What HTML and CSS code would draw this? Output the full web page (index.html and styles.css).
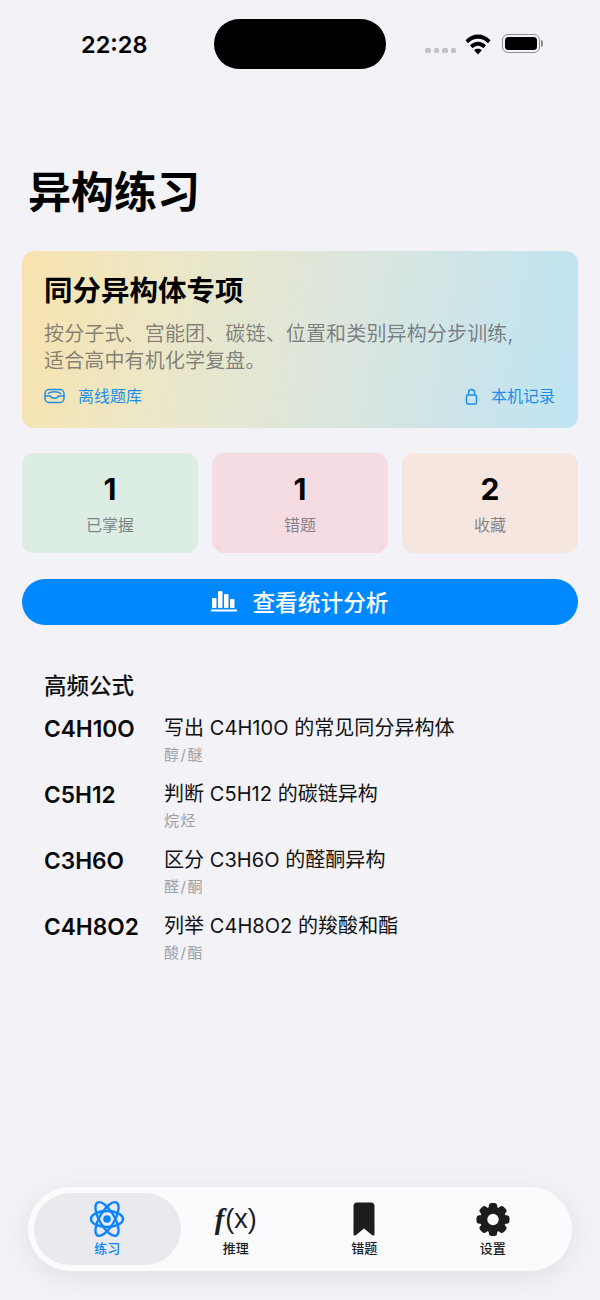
FILE: index.html
```html
<!DOCTYPE html>
<html lang="zh-CN">
<head>
  <meta charset="UTF-8">
  <meta name="viewport" content="width=device-width, initial-scale=1">
  <title>异构练习</title>
  <link rel="stylesheet" href="styles.css">
</head>
<body>

<div class="page">
  <div class="status-bar">
    <div class="time">22:28</div>
    <div class="island"></div>
    <div class="status-icons">
      <div class="signal"><span></span><span></span><span></span><span></span></div>
      <svg class="wifi" width="28" height="23" viewBox="0 0 28 20" preserveAspectRatio="none">
        <path d="M1.5 7.2 C8.5 0.6 19.5 0.6 26.5 7.2 L24 9.8 C18.2 4.6 9.8 4.6 4 9.8 Z" fill="#000"/>
        <path d="M6 11.6 C10.8 7.4 17.2 7.4 22 11.6 L19.5 14.1 C16 11.2 12 11.2 8.5 14.1 Z" fill="#000"/>
        <path d="M10.2 15.8 C12.4 14.2 15.6 14.2 17.8 15.8 L14 19.6 Z" fill="#000"/>
      </svg>
      <div class="battery"><div class="battery-fill"></div></div>
      <div class="battery-cap"></div>
    </div>
  </div>

  <h1 class="title">异构练习</h1>

  <div class="hero">
    <h2>同分异构体专项</h2>
    <p>按分子式、宫能团、碳链、位置和类别异构分步训练,<br>适合高中有机化学复盘。</p>
    <div class="hero-tags">
      <div class="tag">
        <svg width="21" height="16" viewBox="0 0 21 16" fill="none" stroke="#1e8fe8" stroke-width="1.5">
          <rect x="1" y="1.500" width="19" height="13" rx="4"/>
          <path d="M1 8 H6.500 C7.500 11 13.500 11 14.500 8 H20"/>
          <path d="M4 6 C6 3 15 3 17 6"/>
        </svg>
        <span>离线题库</span>
      </div>
      <div class="tag">
        <svg width="13" height="17" viewBox="0 0 13 17" fill="none" stroke="#1e8fe8" stroke-width="1.5">
          <rect x="1.500" y="7" width="10" height="9" rx="1.500"/>
          <path d="M3.500 7 V4.500 C3.500 0.500 9.500 0.500 9.500 4.500 V7"/>
        </svg>
        <span>本机记录</span>
      </div>
    </div>
  </div>

  <div class="stats">
    <div class="stat stat-green"><b>1</b><span>已掌握</span></div>
    <div class="stat stat-pink"><b>1</b><span>错题</span></div>
    <div class="stat stat-peach"><b>2</b><span>收藏</span></div>
  </div>

  <button class="stats-btn" type="button">
    <svg width="26" height="22" viewBox="0 0 26 22" fill="#fff">
      <rect x="1" y="8" width="4.500" height="10" rx="1"/>
      <rect x="7" y="1" width="4.500" height="17" rx="1"/>
      <rect x="13" y="4" width="4.500" height="14" rx="1"/>
      <rect x="19" y="9" width="4.500" height="9" rx="1"/>
      <rect x="0" y="19.500" width="26" height="2"/>
    </svg>
    <span>查看统计分析</span>
  </button>

  <div class="formulas">
    <h3>高频公式</h3>
    <div class="formula">
      <div class="formula-name">C4H10O</div>
      <div class="formula-text"><div class="question">写出 C4H10O 的常见同分异构体</div><div class="kind">醇/醚</div></div>
    </div>
    <div class="formula">
      <div class="formula-name">C5H12</div>
      <div class="formula-text"><div class="question">判断 C5H12 的碳链异构</div><div class="kind">烷烃</div></div>
    </div>
    <div class="formula">
      <div class="formula-name">C3H6O</div>
      <div class="formula-text"><div class="question">区分 C3H6O 的醛酮异构</div><div class="kind">醛/酮</div></div>
    </div>
    <div class="formula">
      <div class="formula-name">C4H8O2</div>
      <div class="formula-text"><div class="question">列举 C4H8O2 的羧酸和酯</div><div class="kind">酸/酯</div></div>
    </div>
  </div>

  <div class="tabbar">
    <div class="tab active">
      <svg class="tab-icon" width="36" height="38" viewBox="0 0 36 38" fill="none" stroke="#0a84ff" stroke-width="2.400">
        <ellipse cx="18" cy="19" rx="19" ry="7.500" transform="rotate(60 18 19)"/>
        <ellipse cx="18" cy="19" rx="19" ry="7.500" transform="rotate(-60 18 19)"/>
        <ellipse cx="18" cy="19" rx="16" ry="8"/>
        <circle cx="18" cy="19" r="3.800" fill="#0a84ff" stroke="none"/>
      </svg>
      <span>练习</span>
    </div>
    <div class="tab">
      <div class="tab-icon fx"><i>f</i>(x)</div>
      <span>推理</span>
    </div>
    <div class="tab">
      <svg class="tab-icon" width="24" height="36" viewBox="0 0 24 36" fill="#1c1c1e">
        <path d="M4.500 1.500 H19.500 C21 1.500 22.500 3 22.500 4.500 V33 C22.500 34.500 21.300 35 20.300 34.200 L12 27.500 L3.700 34.200 C2.700 35 1.500 34.500 1.500 33 V4.500 C1.500 3 3 1.500 4.500 1.500 Z"/>
      </svg>
      <span>错题</span>
    </div>
    <div class="tab">
      <svg class="tab-icon" width="36" height="36" viewBox="0 0 36 36" fill="#1c1c1e">
        <circle cx="18" cy="18.500" r="13"/>
        <rect x="13.800" y="2" width="8.400" height="33" rx="3"/>
        <rect x="13.800" y="2" width="8.400" height="33" rx="3" transform="rotate(45 18 18.500)"/>
        <rect x="13.800" y="2" width="8.400" height="33" rx="3" transform="rotate(90 18 18.500)"/>
        <rect x="13.800" y="2" width="8.400" height="33" rx="3" transform="rotate(135 18 18.500)"/>
        <circle cx="18" cy="18.500" r="5.700" fill="#fbfbfe"/>
      </svg>
      <span>设置</span>
    </div>
  </div>
</div>

</body>
</html>
```

FILE: styles.css
```css
* {
  box-sizing: border-box;
  font-family: Inter, "Noto Sans CJK SC", sans-serif;
}

body {
  margin: 0;
  background: #f2f2f7;
}

.page {
  display: flex;
  flex-direction: column;
  height: 1300px;
  padding: 19px 22px 29px;
}

.status-bar {
  display: flex;
  align-items: center;
  height: 50px;
  margin: 0 -22px;
  padding-left: 81px;
}

.time {
  width: 133px;
  font-size: 23.500px;
  font-weight: 600;
  color: #000;
}

.island {
  width: 172px;
  height: 50px;
  border-radius: 25px;
  background: #000;
}

.status-icons {
  display: flex;
  align-items: center;
  margin-left: 39px;
}

.signal {
  display: flex;
  gap: 3px;
  margin: 13px 8px 0 0;
}

.signal span {
  width: 5.500px;
  height: 5px;
  border-radius: 1.500px;
  background: #c4c4c8;
}

.wifi {
  margin-top: -2px;
}

.battery {
  width: 38px;
  height: 19px;
  margin: -1px 0 0 9.500px;
  padding: 2px;
  border: 1.500px solid #8e8e93;
  border-radius: 6px;
}

.battery-fill {
  height: 100%;
  border-radius: 3.500px;
  background: #000;
}

.battery-cap {
  width: 2.500px;
  height: 7px;
  margin: -1px 0 0 1px;
  border-radius: 0 2px 2px 0;
  background: #8e8e93;
}

.title {
  margin: 95px 0 0 6px;
  font-size: 43px;
  line-height: 56px;
  font-weight: 700;
  color: #000;
}

.hero {
  margin-top: 31px;
  height: 177px;
  padding: 22px 22px 0;
  border-radius: 12px;
  background: linear-gradient(100deg, #f8e3ae 0%, #ece7c6 25%, #dde6dc 55%, #c8e4ec 85%, #bee4f2 100%);
}

.hero h2 {
  margin: 0;
  font-size: 28.500px;
  line-height: 36px;
  font-weight: 700;
  color: #000;
}

.hero p {
  margin: 12px 0 0;
  font-size: 20px;
  letter-spacing: 0.150px;
  line-height: 27px;
  color: rgba(60, 60, 67, 0.6);
}

.hero-tags {
  display: flex;
  justify-content: space-between;
  margin-top: 9px;
  padding-right: 1px;
}

.tag {
  display: flex;
  align-items: center;
  gap: 13px;
  font-size: 16px;
  line-height: 24px;
  color: #1e8fe8;
}

.stats {
  display: flex;
  gap: 14px;
  margin-top: 25px;
}

.stat {
  flex: 1;
  display: flex;
  flex-direction: column;
  align-items: center;
  height: 100px;
  padding-top: 18px;
  border-radius: 12px;
}

.stat b {
  font-size: 30px;
  line-height: 36px;
  font-weight: 700;
  color: #000;
}

.stat span {
  margin-top: 7px;
  font-size: 16px;
  line-height: 22px;
  color: rgba(60, 60, 67, 0.6);
}

.stat-green { background: #dcede4; }
.stat-pink { background: #f5dce3; }
.stat-peach { background: #f5e6df; }

.stats-btn {
  display: flex;
  align-items: center;
  justify-content: center;
  gap: 15px;
  width: 100%;
  height: 46px;
  margin-top: 26px;
  padding: 0 0 2px;
  border: none;
  border-radius: 23px;
  background: #0088ff;
  color: #fff;
  font-size: 22.700px;
  font-weight: 500;
}

.formulas {
  margin-top: 44px;
  padding-left: 22px;
}

.formulas h3 {
  margin: 0 0 10px;
  font-size: 22.500px;
  line-height: 34px;
  font-weight: 500;
  color: #111;
}

.formula {
  display: flex;
  height: 66px;
}

.formula-name {
  width: 120px;
  font-size: 22.700px;
  line-height: 32px;
  font-weight: 600;
  color: #0a0a0a;
}

.question {
  font-size: 20px;
  letter-spacing: 0.050px;
  line-height: 30px;
  color: #111;
}

.kind {
  margin-top: 1px;
  font-size: 15px;
  letter-spacing: 1.500px;
  line-height: 22px;
  color: #a0a0a4;
}

.tabbar {
  display: grid;
  grid-template-columns: repeat(4, 1fr);
  height: 84px;
  margin: auto 6px 0;
  padding: 0 15px;
  border-radius: 42px;
  background: #fbfbfe;
  box-shadow: 0 6px 30px rgba(0, 0, 0, 0.08);
}

.tab {
  position: relative;
  display: flex;
  flex-direction: column;
  align-items: center;
  padding-top: 13px;
  font-size: 13px;
  font-weight: 500;
  color: #1c1c1e;
}

.tab.active {
  color: #0a84ff;
}

.tab.active::before {
  content: "";
  position: absolute;
  top: 6px;
  bottom: 6px;
  left: -9px;
  right: -9px;
  border-radius: 36px;
  background: #e9e9ee;
}

.tab-icon {
  position: relative;
  height: 38px;
}

.tab span {
  position: relative;
  line-height: 20px;
}

.fx {
  display: flex;
  align-items: center;
  padding-top: 1px;
  font-family: "Liberation Sans", sans-serif;
  font-size: 27px;
  font-weight: 400;
  color: #1c1c1e;
}

.fx i {
  font-family: "Liberation Serif", serif;
  font-size: 29px;
  font-weight: 700;
  margin-right: 1px;
}
```
